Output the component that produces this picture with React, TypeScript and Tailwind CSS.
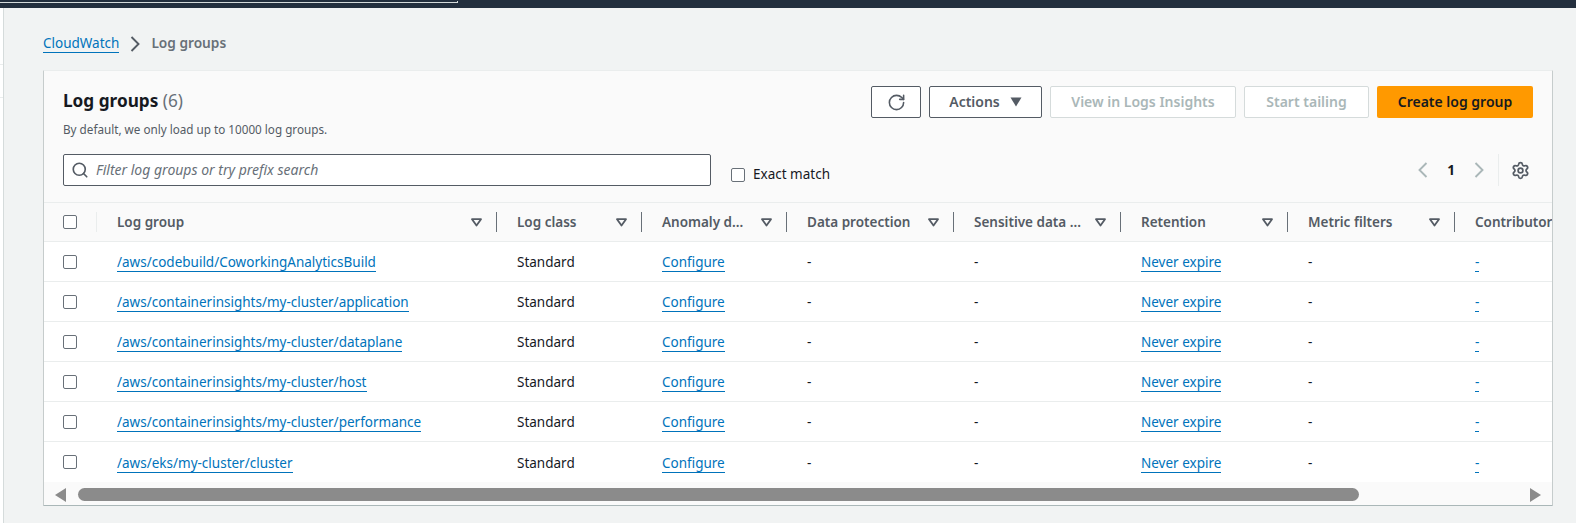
import { Search, RotateCw, Settings } from "lucide-react";

const columns = [
  { label: "Log group", width: "w-[400px]" },
  { label: "Log class", width: "w-[145px]" },
  { label: "Anomaly d...", width: "w-[145px]" },
  { label: "Data protection", width: "w-[167px]" },
  { label: "Sensitive data ...", width: "w-[167px]" },
  { label: "Retention", width: "w-[167px]" },
  { label: "Metric filters", width: "w-[167px]" },
  { label: "Contributor Insights", width: "w-[190px]" },
];

const groups = [
  "/aws/codebuild/CoworkingAnalyticsBuild",
  "/aws/containerinsights/my-cluster/application",
  "/aws/containerinsights/my-cluster/dataplane",
  "/aws/containerinsights/my-cluster/host",
  "/aws/containerinsights/my-cluster/performance",
  "/aws/eks/my-cluster/cluster",
];

const Link = ({ children }: { children: React.ReactNode }) => (
  <a className="inline-block border-b border-[#0073bb] leading-[17px] text-[#0073bb]">{children}</a>
);

const Check = () => (
  <span className="block h-[14px] w-[14px] rounded-[2px] border border-[#687078] bg-white" />
);

const SortIcon = () => (
  <svg width="11" height="9" viewBox="0 0 11 9" className="shrink-0">
    <path d="M1 1.2h9L5.5 7.6z" fill="none" stroke="#545b64" strokeWidth="1.8" strokeLinejoin="round" />
  </svg>
);

const Chevron = ({ left, color, className }: { left?: boolean; color: string; className?: string }) => (
  <svg width="10" height="16" viewBox="0 0 10 16" className={className}>
    <path d={left ? "M8.5 1L1.5 8l7 7" : "M1.5 1l7 7-7 7"} fill="none" stroke={color} strokeWidth="1.9" />
  </svg>
);

const App = () => {
  return (
    <div className="flex h-[523px] w-[1576px] flex-col overflow-hidden bg-[#f1f3f3] font-['Noto_Sans',sans-serif] text-[13.5px] text-[#16191f]">
      <div className="h-2 shrink-0 bg-[#232f3e] pt-[1px]">
        <div className="h-[2px] w-[458px] border-r border-b border-[#d5dbdb]" />
      </div>
      <div className="flex min-h-0 flex-1">
        <div className="flex w-1 shrink-0 flex-col border-r border-[#d5dbdb] bg-white">
          <div className="mt-[56px] h-[34px] border-y border-[#eaeded]" />
        </div>
        <div className="min-w-0 flex-1 pl-[39px] pr-[23px]">
          <div className="flex h-[62px] items-center pt-[9px]">
            <a className="border-b border-[#0073bb] leading-[17px] text-[#0073bb]">CloudWatch</a>
            <Chevron color="#545b64" className="ml-[11px] mr-[11px]" />
            <span className="text-[13.7px] font-semibold text-[#687078]">Log groups</span>
          </div>
          <div className="h-[436px] overflow-hidden rounded-[1px] border border-[#eaeded] border-l-[#c6cccc] border-r-[#c6cccc] border-b-[#aab7b8] bg-[#fafafa]">
            <div className="flex justify-between pl-[19px] pr-[19px] pt-[15px]">
              <div>
                <h1 className="text-[17.2px] font-bold leading-[30px]">
                  Log groups <span className="font-normal text-[#687078]">(6)</span>
                </h1>
                <p className="mt-[5px] text-[11.7px] leading-[16px] text-[#545b64]">By default, we only load up to 10000 log groups.</p>
              </div>
              <div className="flex h-8 gap-2 text-sm font-semibold">
                <button className="flex w-[50px] items-center justify-center rounded-[2px] border border-[#545b64] bg-white">
                  <RotateCw size={19} strokeWidth={2} className="text-[#545b64]" />
                </button>
                <button className="flex w-[113px] items-center justify-center gap-[10px] rounded-[2px] border border-[#545b64] bg-white text-[#545b64]">
                  Actions
                  <svg width="12" height="10" viewBox="0 0 12 10"><path d="M0.5 0.5h11L6 9.5z" fill="#545b64" /></svg>
                </button>
                <button className="w-[186px] rounded-[2px] border border-[#d5dbdb] bg-white text-[#aab7b8]">View in Logs Insights</button>
                <button className="w-[125px] rounded-[2px] border border-[#d5dbdb] bg-white text-[#aab7b8]">Start tailing</button>
                <button className="w-[156px] rounded-[2px] bg-[#ff9900] text-[#16191f]">Create log group</button>
              </div>
            </div>
            <div className="mt-[17px] flex h-8 items-center pl-[19px] pr-[19px]">
              <div className="flex h-8 w-[648px] items-center gap-[7px] rounded-[2px] border border-[#545b64] bg-white pl-[7px]">
                <Search size={18} strokeWidth={2.2} className="text-[#545b64]" />
                <span className="text-sm italic text-[#687078]">Filter log groups or try prefix search</span>
              </div>
              <div className="ml-5 mt-[9px] flex items-center gap-2">
                <Check />
                Exact match
              </div>
              <div className="ml-auto flex h-8 items-center">
                <Chevron left color="#aab7b8" />
                <span className="mx-[19px] font-bold">1</span>
                <Chevron color="#aab7b8" />
                <div className="ml-[14px] h-8 w-px bg-[#eaeded]" />
                <Settings size={19} strokeWidth={2.2} className="ml-[12px] mr-[3px] text-[#545b64]" />
              </div>
            </div>
            <div className="mt-4 overflow-hidden">
              <table className="w-[1601px] table-fixed border-collapse">
                <thead>
                  <tr className="h-[39px] border-y border-[#eaeded] bg-[#fafafa]">
                    <th className="w-[53px] pl-[19px]">
                      <div className="flex h-5 items-center justify-between border-r border-[#eaeded]">
                        <Check />
                      </div>
                    </th>
                    {columns.map((column) => (
                      <th key={column.label} className={`${column.width} p-0 text-left font-semibold text-[#545b64]`}>
                        <div className="flex h-5 items-center justify-between whitespace-nowrap border-r border-[#687078] pl-5 pr-[14px]">
                          {column.label}
                          <SortIcon />
                        </div>
                      </th>
                    ))}
                  </tr>
                </thead>
                <tbody>
                  {groups.map((group) => (
                    <tr key={group} className="h-10 border-b border-[#eaeded] bg-white last:border-b-0">
                      <td className="pl-[19px]"><Check /></td>
                      <td className="pl-5 pt-[2px]"><Link>{group}</Link></td>
                      <td className="pl-5 pt-[2px]">Standard</td>
                      <td className="pl-5 pt-[2px]"><Link>Configure</Link></td>
                      <td className="pl-5 pt-[2px]">-</td>
                      <td className="pl-5 pt-[2px]">-</td>
                      <td className="pl-5 pt-[2px]"><Link>Never expire</Link></td>
                      <td className="pl-5 pt-[2px]">-</td>
                      <td className="pl-5 pt-[2px]"><Link>-</Link></td>
                    </tr>
                  ))}
                </tbody>
              </table>
            </div>
            <div className="flex h-[25px] items-center px-[11px] pt-[1px]">
              <svg width="12" height="14" viewBox="0 0 12 14"><path d="M11 0v14L0 7z" fill="#8b8b8b" /></svg>
              <div className="ml-[11px] h-[13px] w-[1281px] rounded-full bg-[#8b8b8b]" />
              <svg width="12" height="14" viewBox="0 0 12 14" className="ml-auto"><path d="M1 0v14l11-7z" fill="#8b8b8b" /></svg>
            </div>
          </div>
        </div>
      </div>
    </div>
  );
};

export default App;
